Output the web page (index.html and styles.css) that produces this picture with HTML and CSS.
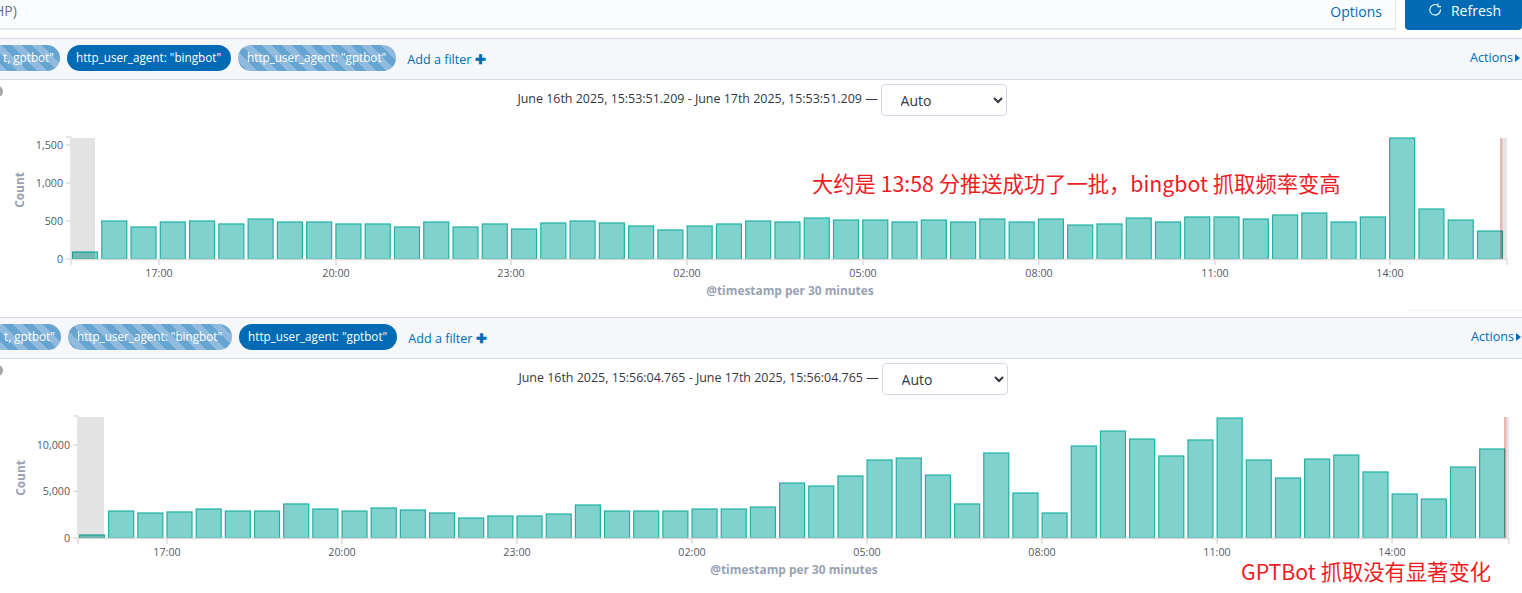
FILE: index.html
```html
<!DOCTYPE html>
<html>
<head>
    <meta name="viewport" content="width=device-width, initial-scale=1">
    <link rel="stylesheet" href="styles.css">
</head>
<body>

<div class="topbar">
    <div class="query">
        <span class="query_text">HP)</span>
        <a class="options">Options</a>
    </div>
    <button class="refresh">
        <svg class="refresh_icon" viewBox="0 0 14 14" width="14" height="14">
            <path d="M9.6 2.1 A5.3 5.3 0 1 0 12.4 6.2" fill="none" stroke="#fff" stroke-width="1.1"/>
            <path d="M10 0.4 V3.6 H13" fill="none" stroke="#fff" stroke-width="1.1"/>
        </svg>
        Refresh
    </button>
</div>

<section class="panel">
    <div class="filterbar">
        <span class="pill pill_first pill_off">t, gptbot"</span>
        <span class="pill">http_user_agent: "bingbot"</span>
        <span class="pill pill_off">http_user_agent: "gptbot"</span>
        <a class="add_filter">Add a filter <b>✚</b></a>
        <a class="actions">Actions<i class="caret"></i></a>
    </div>
    <div class="timebar">
        <span class="dot"></span>
        <span class="range">June 16th 2025, 15:53:51.209 - June 17th 2025, 15:53:51.209 —</span>
        <select class="interval"><option>Auto</option></select>
    </div>
    <svg class="chart" id="chart_bing" width="1522" height="170"></svg>
    <div class="note note_bing">大约是 13:58 分推送成功了一批&#xFF0C;bingbot 抓取频率变高</div>
    <div class="rule"></div>
</section>

<section class="panel panel_second">
    <div class="filterbar">
        <span class="pill pill_first pill_off">t, gptbot"</span>
        <span class="pill pill_off">http_user_agent: "bingbot"</span>
        <span class="pill">http_user_agent: "gptbot"</span>
        <a class="add_filter">Add a filter <b>✚</b></a>
        <a class="actions">Actions<i class="caret"></i></a>
    </div>
    <div class="timebar">
        <span class="dot"></span>
        <span class="range">June 16th 2025, 15:56:04.765 - June 17th 2025, 15:56:04.765 —</span>
        <select class="interval"><option>Auto</option></select>
    </div>
    <svg class="chart" id="chart_gpt" width="1522" height="170"></svg>
    <div class="note note_gpt">GPTBot 抓取没有显著变化</div>
</section>

<script src="chart.js"></script>

</body>
</html>
```

FILE: styles.css
```css
* {
    box-sizing: border-box;
}

body {
    margin: 0;
    height: 593px;
    overflow: hidden;
    background: #fff;
    font-family: "Open Sans", "Noto Sans", sans-serif;
    color: #343741;
}

a {
    color: #006bb4;
}

.topbar {
    display: flex;
    height: 38px;
    align-items: flex-start;
}

.query {
    display: flex;
    justify-content: space-between;
    width: 1396px;
    height: 30px;
    padding: 1px 13px 0 0;
    background: #fbfcfd;
    border-right: 1px solid #e4e7ec;
    border-bottom: 2px solid #e4e7ec;
    font-size: 14px;
    line-height: 19px;
}

.query_text {
    margin-left: -6px;
    color: #69707d;
}

.options {
    margin-top: 1px;
}

.refresh {
    display: flex;
    align-items: center;
    justify-content: center;
    gap: 9px;
    width: 117px;
    height: 30px;
    margin-left: 9px;
    padding: 0 0 9px 2px;
    border: 0;
    border-radius: 0 0 4px 4px;
    background: #006bb4;
    color: #fff;
    font-family: inherit;
    font-size: 14px;
}

.refresh_icon {
    margin-top: -1px;
}

.panel {
    position: relative;
    height: 279px;
}

.panel_second {
    height: 276px;
}

.filterbar {
    display: flex;
    align-items: center;
    height: 42px;
    padding: 0 2px 2px 0;
    background: #f5f7fa;
    border-top: 1px solid #d3dae6;
    border-bottom: 1px solid #d3dae6;
}

.panel_second .filterbar {
    padding-left: 1px;
    padding-right: 1px;
}

.pill {
    height: 26px;
    margin-right: 7px;
    padding: 0 10px 0 9px;
    border-radius: 13px;
    background: #006bb4;
    color: #fff;
    font-size: 11.7px;
    line-height: 25px;
    white-space: nowrap;
}

.pill_off {
    background: repeating-linear-gradient(45deg, #66a4d1, #66a4d1 7px, #90bbde 7px, #90bbde 14px);
}

.pill_first {
    width: 72px;
    margin-left: -12px;
    padding-left: 15px;
}

.add_filter {
    margin-left: 4px;
    margin-top: 2px;
    font-size: 12.6px;
}

.add_filter b {
    font-size: 13px;
}

.actions {
    display: flex;
    align-items: center;
    margin-left: auto;
    margin-top: -1px;
    font-size: 12.6px;
}

.caret {
    width: 0;
    height: 0;
    margin-left: 2px;
    border-top: 4px solid transparent;
    border-bottom: 4px solid transparent;
    border-left: 5px solid #006bb4;
}

.timebar {
    position: relative;
    display: flex;
    align-items: center;
    justify-content: center;
    gap: 3px;
    height: 50px;
    padding: 0 0 10px 2px;
    font-size: 12.45px;
}

.panel_second .timebar {
    padding-left: 4px;
}

.range {
    margin-top: -3px;
}

.dot {
    position: absolute;
    left: -8px;
    top: 6px;
    width: 11px;
    height: 11px;
    border-radius: 50%;
    background: #a6a6a6;
}

.interval {
    width: 126px;
    height: 32px;
    padding-left: 15px;
    border: 1px solid #d3dae6;
    border-radius: 4px;
    background: #fff;
    color: #343741;
    font-family: inherit;
    font-size: 14px;
}

.chart {
    display: block;
}

.chart text {
    font-family: "Open Sans", "Noto Sans", sans-serif;
}

.tick_label {
    font-size: 10.7px;
    fill: #535966;
}

.axis_title {
    font-size: 11.9px;
    font-weight: 700;
    fill: #98a2b3;
}

.note {
    position: absolute;
    color: #ee1c25;
    font-family: "Noto Sans CJK SC", "Noto Sans", sans-serif;
    font-size: 21.3px;
    line-height: 20px;
    white-space: nowrap;
}

.note_bing {
    left: 812px;
    top: 135px;
}

.note_gpt {
    left: 1241px;
    top: 244px;
}

.rule {
    position: absolute;
    right: 0;
    top: 272px;
    width: 114px;
    border-top: 1px solid #edf0f4;
}
```

FILE: chart.js
```js
const SVG_NS = 'http://www.w3.org/2000/svg';

const charts = {
    chart_bing: {
        axisLeft: 71,
        axisRight: 1507,
        firstBar: 72,
        step: 29.27,
        perCount: 0.076,
        yTicks: [0, 500, 1000, 1500],
        shadeLeft: 95,
        redLine: 1500,
        titleX: 790,
        labels: [159, 336, 511, 687, 863, 1039, 1215, 1390],
        values: [92, 500, 421, 487, 500, 461, 526, 487, 487, 461, 461, 421, 487, 421, 461, 395, 474, 500, 474, 434,
            382, 434, 461, 500, 487, 539, 513, 513, 487, 513, 487, 526, 487, 526, 447, 461, 539, 487, 553, 553,
            526, 579, 605, 487, 553, 1592, 658, 513, 368]
    },
    chart_gpt: {
        axisLeft: 78,
        axisRight: 1509,
        firstBar: 79,
        step: 29.17,
        perCount: 0.0093,
        yTicks: [0, 5000, 10000],
        shadeLeft: 104,
        redLine: 1504,
        titleX: 794,
        labels: [167, 342, 517, 692, 867, 1042, 1217, 1392],
        values: [323, 2900, 2690, 2800, 3120, 2900, 2900, 3660, 3120, 2900, 3230, 3010, 2690, 2150, 2370, 2370, 2580,
            3550, 2900, 2900, 2900, 3120, 3120, 3330, 5910, 5590, 6670, 8390, 8600, 6770, 3660, 9140, 4840, 2690,
            9890, 11500, 10640, 8820, 10540, 12900, 8390, 6450, 8490, 8920, 7100, 4730, 4190, 7630, 9570]
    }
};

const TOP = 8;
const ZERO = 129;
const TIMES = ['17:00', '20:00', '23:00', '02:00', '05:00', '08:00', '11:00', '14:00'];

function add(svg, tag, attrs, text) {
    const el = document.createElementNS(SVG_NS, tag);
    Object.keys(attrs).forEach(key => el.setAttribute(key, attrs[key]));
    if (text) {
        el.textContent = text;
    }
    svg.appendChild(el);
}

Object.keys(charts).forEach(id => {
    const svg = document.getElementById(id);
    const c = charts[id];
    const axis = { stroke: '#dcdcdc', 'stroke-width': 1.5 };

    c.values.forEach((value, i) => {
        const height = Math.min(value * c.perCount, ZERO - TOP);
        add(svg, 'rect', {
            x: c.firstBar + i * c.step + 0.5,
            y: ZERO - height,
            width: 25,
            height: height,
            fill: '#80d2cc',
            stroke: '#1fb1a5',
            'stroke-width': 1.2
        });
    });

    // Shaded ends of the time range and the "now" line go over the bars
    add(svg, 'rect', { x: c.axisLeft + 1, y: TOP, width: c.shadeLeft - c.axisLeft - 1, height: ZERO - TOP, fill: 'rgba(0,0,0,.11)' });
    add(svg, 'rect', { x: c.redLine, y: TOP, width: c.axisRight - c.redLine, height: ZERO - TOP, fill: 'rgba(0,0,0,.1)' });
    add(svg, 'rect', { x: c.redLine, y: TOP, width: 2.5, height: ZERO - TOP, fill: 'rgba(255,0,0,.2)' });

    add(svg, 'line', Object.assign({ x1: c.axisLeft, y1: TOP - 1, x2: c.axisLeft, y2: ZERO + 6 }, axis));
    add(svg, 'line', Object.assign({ x1: c.axisLeft, y1: ZERO + 0.5, x2: c.axisRight, y2: ZERO + 0.5 }, axis));
    add(svg, 'line', Object.assign({ x1: c.axisRight, y1: ZERO, x2: c.axisRight, y2: ZERO + 6 }, axis));
    add(svg, 'line', Object.assign({ x1: c.axisLeft - 5, y1: TOP - 1, x2: c.axisLeft, y2: TOP - 1 }, axis));

    c.yTicks.forEach(tick => {
        const y = ZERO - tick * c.perCount;
        add(svg, 'line', Object.assign({ x1: c.axisLeft - 5, y1: y, x2: c.axisLeft, y2: y }, axis));
        add(svg, 'text', { class: 'tick_label', x: c.axisLeft - 8, y: y + 3.5, 'text-anchor': 'end' }, tick.toLocaleString('en-US'));
    });

    c.labels.forEach((x, i) => {
        add(svg, 'line', Object.assign({ x1: x, y1: ZERO, x2: x, y2: ZERO + 6 }, axis));
        add(svg, 'text', { class: 'tick_label', x: x, y: ZERO + 18, 'text-anchor': 'middle' }, TIMES[i]);
    });

    const countY = id === 'chart_bing' ? 60 : 69;
    add(svg, 'text', {
        class: 'axis_title',
        x: 0,
        y: 0,
        'text-anchor': 'middle',
        transform: 'translate(' + (c.axisLeft === 71 ? 24 : 25) + ' ' + countY + ') rotate(-90)'
    }, 'Count');
    add(svg, 'text', { class: 'axis_title', x: c.titleX, y: ZERO + 36, 'text-anchor': 'middle' }, '@timestamp per 30 minutes');
});
```
